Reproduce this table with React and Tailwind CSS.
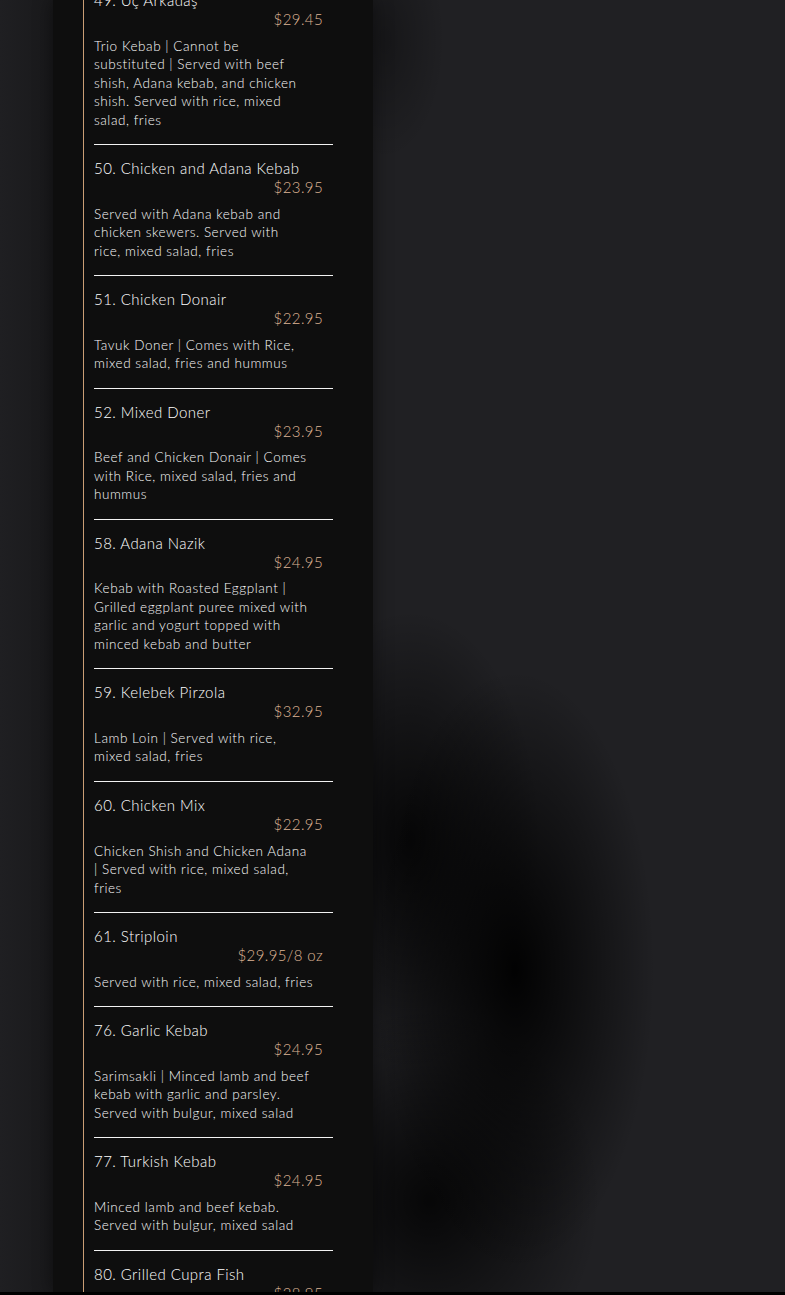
import React from "react";

const items = [
  { t: "49. Üç Arkadaş", p: "$29.45", d: ["Trio Kebab | Cannot be", "substituted | Served with beef", "shish, Adana kebab, and chicken", "shish. Served with rice, mixed", "salad, fries"] },
  { t: "50. Chicken and Adana Kebab", p: "$23.95", d: ["Served with Adana kebab and", "chicken skewers. Served with", "rice, mixed salad, fries"] },
  { t: "51. Chicken Donair", p: "$22.95", d: ["Tavuk Doner | Comes with Rice,", "mixed salad, fries and hummus"] },
  { t: "52. Mixed Doner", p: "$23.95", d: ["Beef and Chicken Donair | Comes", "with Rice, mixed salad, fries and", "hummus"] },
  { t: "58. Adana Nazik", p: "$24.95", d: ["Kebab with Roasted Eggplant |", "Grilled eggplant puree mixed with", "garlic and yogurt topped with", "minced kebab and butter"] },
  { t: "59. Kelebek Pirzola", p: "$32.95", d: ["Lamb Loin | Served with rice,", "mixed salad, fries"] },
  { t: "60. Chicken Mix", p: "$22.95", d: ["Chicken Shish and Chicken Adana", "| Served with rice, mixed salad,", "fries"] },
  { t: "61. Striploin", p: "$29.95/8 oz", d: ["Served with rice, mixed salad, fries"] },
  { t: "76. Garlic Kebab", p: "$24.95", d: ["Sarimsakli | Minced lamb and beef", "kebab with garlic and parsley.", "Served with bulgur, mixed salad"] },
  { t: "77. Turkish Kebab", p: "$24.95", d: ["Minced lamb and beef kebab.", "Served with bulgur, mixed salad"] },
  { t: "80. Grilled Cupra Fish", p: "$28.95", d: ["Served with rice, mixed salad, fries"] },
];

export default function App() {
  return (
    <div
      className="w-full h-[1295px] overflow-hidden flex flex-col bg-[#202023] bg-[radial-gradient(ellipse_140px_300px_at_515px_970px,rgba(0,0,0,0.95),transparent),radial-gradient(ellipse_130px_230px_at_410px_840px,rgba(0,0,0,0.8),transparent),radial-gradient(ellipse_170px_190px_at_430px_1200px,rgba(0,0,0,0.8),transparent),radial-gradient(ellipse_60px_120px_at_385px_40px,rgba(0,0,0,0.3),transparent)]"
      style={{ fontFamily: "Lato, 'Open Sans', sans-serif" }}
    >
      <div className="flex-1 flex min-h-0">
        <div className="w-[53px] shrink-0 bg-gradient-to-r from-[#1f1f22] to-[#19191b]" />
        <div className="w-[320px] shrink-0 bg-[#0e0e0e] pl-[30px] pr-[40px] overflow-hidden shadow-[0_0_18px_rgba(0,0,0,0.45)]">
          <div className="h-full border-l border-[#c99d74] pl-[10px] overflow-hidden">
            <div className="mt-[-9px] flex flex-col font-light">
              {items.map((it, i) => (
                <div key={i} className={i === 0 ? "" : "pt-[14px]"}>
                  <div className="text-[15px] leading-[19px] tracking-[0.45px] text-white whitespace-nowrap">{it.t}</div>
                  <div className="w-[229px] text-right text-[15px] leading-[19px] tracking-[0.4px] text-[#deb494]">{it.p}</div>
                  <div className="mt-[7.5px] text-[13.5px] leading-[18.5px] tracking-[0.55px] text-[#fafafa]">
                    {it.d.map((l, j) => (
                      <div key={j} className="whitespace-nowrap">{l}</div>
                    ))}
                  </div>
                  <div className="mt-[15px] mb-[0.1px] h-px bg-[#f2f2f2]" />
                </div>
              ))}
            </div>
          </div>
        </div>
        <div className="flex-1" />
      </div>
      <div className="h-[3px] bg-black shrink-0" />
    </div>
  );
}
